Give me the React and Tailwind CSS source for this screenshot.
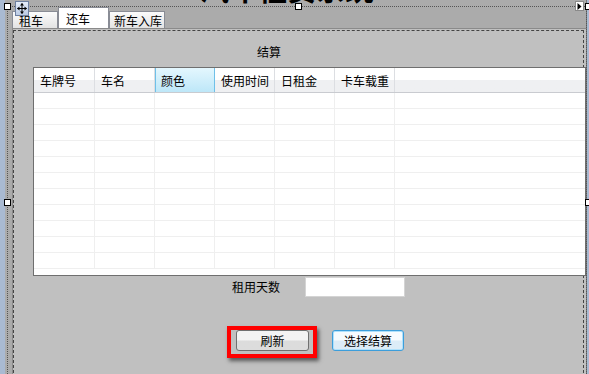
import React from "react";

const font = { fontFamily: '"Noto Sans CJK SC", "Noto Sans", sans-serif' };

const columns = [
  { name: "车牌号", w: "w-[61px]" },
  { name: "车名", w: "w-[60px]" },
  { name: "颜色", w: "w-[60px]", selected: true },
  { name: "使用时间", w: "w-[60px]" },
  { name: "日租金", w: "w-[60px]" },
  { name: "卡车载重", w: "w-[60px]" },
];

const rows = Array.from({ length: 11 }, (_, i) => i);

function Handle({ className }) {
  return <div className={"absolute w-[7px] h-[7px] bg-white border border-black " + className} />;
}

function MoveGlyph() {
  return (
    <svg className="absolute left-[15px] top-[1px]" width="14" height="15" viewBox="0 0 14 15">
      <defs>
        <linearGradient id="mg" x1="0" y1="0" x2="0" y2="1">
          <stop offset="0" stopColor="#e6eefa" />
          <stop offset="1" stopColor="#b9c9e2" />
        </linearGradient>
      </defs>
      <rect x="0.5" y="0.5" width="13" height="14" fill="url(#mg)" stroke="#6d7f9f" />
      <path d="M7 2.5 V12.5 M2.5 7.5 H11.5" stroke="#000" strokeWidth="1" />
      <path d="M7 2 L5 4.5 H9 Z M7 13 L5 10.5 H9 Z M2 7.5 L4.5 5.5 V9.5 Z M12 7.5 L9.5 5.5 V9.5 Z" fill="#000" />
    </svg>
  );
}

function Tab({ label, active, className }) {
  if (active) {
    return (
      <div className={"h-[21px] bg-white border border-b-0 border-[#898c95] text-[12px] leading-[14px] pt-[4px] text-black " + className}>
        {label}
      </div>
    );
  }
  return (
    <div className={"h-[17px] bg-gradient-to-b from-[#fbfbfb] to-[#e3e3e3] border border-b-0 border-[#898c95] text-[12px] leading-[14px] pt-[2px] text-black " + className}>
      {label}
    </div>
  );
}

export default function App() {
  return (
    <div className="relative w-[589px] h-[374px] overflow-hidden bg-[#ababab] flex" style={font}>
      <div className="w-[5px] bg-[#a9bad2]" />

      <div className="flex-1 flex flex-col">
        {/* title, mostly cut off above the view */}
        <div className="h-[7px] overflow-hidden pl-[195px]">
          <div className="-mt-[27px] text-[29px] leading-[30px] font-bold text-black whitespace-nowrap">
            汽车租赁系统
          </div>
        </div>

        {/* tab headers */}
        <div className="h-[21px] flex items-end pl-[7px]">
          <Tab label="租车" className="w-[46px] pl-[6px]" />
          <Tab label="还车" active className="w-[51px] pl-[7px]" />
          <Tab label="新车入库" className="w-[56px] pl-[4px]" />
        </div>

        {/* tab page */}
        <div className="relative flex-1 ml-[7px] bg-[#c0c0c0] border-t border-l border-[#8a8a8a] overflow-hidden">
          <div className="absolute left-0 top-[1px] right-[2px] bottom-[-4px] border border-dashed border-[#444]" />

          <div className="relative flex flex-col">
            <div className="pt-[16px] pl-[244px] text-[12px] leading-[14px] text-black">结算</div>

            {/* data grid */}
            <div className="mt-[8px] ml-[20px] w-[553px] h-[209px] bg-white border border-[#6f6f6f] flex flex-col">
              <div className="h-[25px] flex border-b border-[#c9cbd0] bg-gradient-to-b from-white from-50% to-[#eff0f2] to-50%">
                {columns.map((c) =>
                  c.selected ? (
                    <div
                      key={c.name}
                      className={c.w + " h-full border-x border-[#6fc0e8] bg-gradient-to-b from-[#e4f7fe] to-[#bde7f8] text-[12px] leading-[14px] pl-[5px] pt-[6px] text-black"}
                    >
                      {c.name}
                    </div>
                  ) : (
                    <div
                      key={c.name}
                      className={c.w + " h-full border-r border-[#dcdee2] text-[12px] leading-[14px] pl-[6px] pt-[6px] text-black whitespace-nowrap"}
                    >
                      {c.name}
                    </div>
                  )
                )}
                <div className="flex-1" />
              </div>

              {rows.map((r) => (
                <div key={r} className="h-[16px] flex border-b border-[#efefef]">
                  {columns.map((c) => (
                    <div key={c.name} className={c.w + " h-full border-r border-[#efefef]"} />
                  ))}
                  <div className="flex-1" />
                </div>
              ))}
            </div>

            {/* rental days */}
            <div className="mt-[1px] flex items-center h-[20px] pl-[219px]">
              <span className="text-[12px] leading-[14px] text-black w-[48px] whitespace-nowrap">租用天数</span>
              <div className="ml-[25px] w-[100px] h-[20px] bg-white border border-[#d4d4d4]" />
            </div>

            {/* buttons */}
            <div className="mt-[29px] flex items-start pl-[214px]">
              <div className="w-[90px] h-[32px] border-[4px] border-[#ff0000] flex items-start pl-[5px] shadow-[2px_3px_4px_rgba(0,0,0,0.55)]">
                <button className="w-[73px] h-[21px] rounded-[3px] border border-[#707070] bg-gradient-to-b from-[#f3f3f3] from-45% to-[#dcdcdc] to-55% text-[12px] leading-[14px] text-black">
                  刷新
                </button>
              </div>
              <button className="ml-[15px] mt-[4px] w-[72px] h-[21px] rounded-[3px] border border-[#3c9edb] bg-gradient-to-b from-[#f6fbfe] from-45% to-[#dcecf7] to-55% text-[12px] leading-[14px] text-black shadow-[inset_0_0_0_1px_#aee0fb]">
                选择结算
              </button>
            </div>
          </div>
        </div>
      </div>

      <div className="w-[1px] bg-[#777]" />
      <div className="w-[2px] bg-[#a9bad2]" />

      {/* designer selection overlay */}
      <div className="absolute left-[7px] top-[6px] w-[580px] h-[400px] border border-dotted border-[#555] pointer-events-none" />
      <Handle className="left-[4px] top-[3px]" />
      <Handle className="left-[295px] top-[3px]" />
      <Handle className="left-[585px] top-[3px]" />
      <Handle className="left-[4px] top-[199px]" />
      <Handle className="left-[585px] top-[199px]" />
      <MoveGlyph />
      <div className="absolute left-[575px] top-[1px] w-[9px] h-[10px] bg-white border border-[#8a8a8a] flex items-center justify-center">
        <svg width="5" height="7" viewBox="0 0 5 7">
          <path d="M0.5 0 L4.5 3.5 L0.5 7 Z" fill="#000" />
        </svg>
      </div>
    </div>
  );
}
